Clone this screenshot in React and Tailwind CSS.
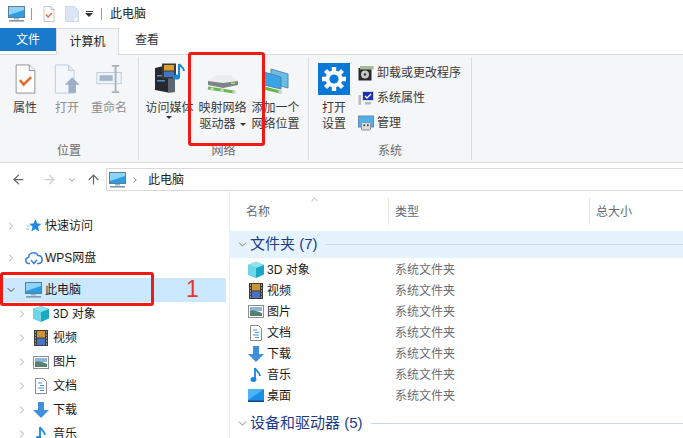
import React from 'react';
import { ChevronRight, ChevronDown, ChevronUp, ArrowLeft, ArrowRight, ArrowUp } from 'lucide-react';

const PcIcon = ({ className }) => (
  <svg viewBox="0 0 17 16" className={className}>
    <rect x="0.5" y="0.5" width="16" height="11" fill="#2f9be0" stroke="#5a7f99" />
    <path d="M1 1h15v3L1 9z" fill="#8fd4f7" />
    <rect x="6" y="12" width="5" height="1.5" fill="#9db3c2" />
    <rect x="1" y="14" width="15" height="1.6" fill="#7f99ab" />
  </svg>
);

const CheckDoc = ({ className }) => (
  <svg viewBox="0 0 22 32" className={className}>
    <path d="M1 1h14l6 6v24H1z" fill="#fff" stroke="#8d8d8d" />
    <path d="M15 1v6h6" fill="#eee" stroke="#8d8d8d" />
    <path d="M5 17l4 5 8-8" fill="none" stroke="#e8682a" strokeWidth="2.6" />
  </svg>
);

const OpenDoc = ({ className }) => (
  <svg viewBox="0 0 28 32" className={className}>
    <path d="M1 1h14l6 6v24H1z" fill="#f3f6fb" stroke="#bccbe0" />
    <path d="M15 1v6h6" fill="#dfe7f2" stroke="#bccbe0" />
    <path d="M19 14l8 8h-4v9h-8v-9h-4z" fill="#9fb0c6" />
  </svg>
);

const RenameIcon = ({ className }) => (
  <svg viewBox="0 0 28 32" className={className}>
    <rect x="1" y="9" width="26" height="12" fill="#eef3f8" stroke="#bfcad6" />
    <rect x="4" y="12" width="14" height="6" fill="#a5b6ca" />
    <path d="M17 2h8M17 30h8M21 2v28" stroke="#a9b3bd" strokeWidth="2" fill="none" />
  </svg>
);

const MediaIcon = ({ className }) => (
  <svg viewBox="0 0 32 30" className={className}>
    <path d="M1 5l13-3 7 3v24l-7 0.5L1 27z" fill="#26292e" />
    <path d="M14 2l7 3v24l-7 .5z" fill="#5d6670" />
    <rect x="3" y="12" width="8" height="1.5" fill="#4a90c8" />
    <rect x="3" y="17" width="8" height="1.5" fill="#4a90c8" />
    <rect x="8" y="0.5" width="14" height="15" fill="#3b3b3b" />
    <rect x="10" y="2" width="10" height="5.5" fill="#d9a02a" />
    <rect x="10" y="8.5" width="10" height="5.5" fill="#3f73c4" />
    <path d="M25 1v13" stroke="#1a86dc" strokeWidth="2" />
    <path d="M25 1c2 3 5 3 5 7" stroke="#1a86dc" strokeWidth="2" fill="none" />
    <ellipse cx="22.5" cy="14" rx="3.5" ry="2.6" fill="#1a86dc" />
  </svg>
);

const DriveIcon = ({ className }) => (
  <svg viewBox="0 0 32 21" className={className}>
    <path d="M1 8l8-6h15l7 6-15 4z" fill="#eceeee" />
    <path d="M1 8l15 2 15-2v4L16 15 1 12z" fill="#7f8586" />
    <rect x="24" y="9.500" width="4" height="1.500" fill="#a8e06a" />
    <path d="M1 15l26 4" stroke="#66bb4a" strokeWidth="3" />
    <circle cx="5" cy="16" r="1.800" fill="#c9d0d0" />
    <circle cx="15" cy="17.500" r="1.800" fill="#c9d0d0" />
    <circle cx="27" cy="19" r="1.800" fill="#c9d0d0" />
  </svg>
);

const NetPlace = ({ className }) => (
  <svg viewBox="0 0 26 26" className={className}>
    <path d="M8 1l17 5v14L8 15z" fill="#6cbcea" stroke="#5a8aa8" />
    <path d="M1 4l17 5v12L1 17z" fill="#3aa3e6" stroke="#4f86aa" />
    <path d="M1 20l16 4" stroke="#66b84a" strokeWidth="3" />
    <circle cx="17" cy="24" r="2" fill="#c9d0d0" />
  </svg>
);

const GearTile = ({ className }) => (
  <svg viewBox="0 0 32 32" className={className}>
    <rect width="32" height="32" fill="#0a78d7" />
    <g stroke="#fff" strokeWidth="4.4">
      <path d="M16 4v24M4 16h24M7.5 7.5l17 17M24.5 7.5l-17 17" />
    </g>
    <circle cx="16" cy="16" r="8.4" fill="#fff" />
    <circle cx="16" cy="16" r="4.6" fill="#0a78d7" />
  </svg>
);

const UninstallIcon = ({ className }) => (
  <svg viewBox="0 0 16 16" className={className}>
    <rect x="0.5" y="3" width="13" height="12.5" fill="#2a2a2a" />
    <rect x="2" y="1" width="13.5" height="3.5" fill="#a9b89c" />
    <circle cx="7" cy="9.5" r="4" fill="#c8c8c8" />
    <circle cx="7" cy="9.5" r="1.2" fill="#333" />
  </svg>
);

const SysPropIcon = ({ className }) => (
  <svg viewBox="0 0 16 16" className={className}>
    <rect x="0.5" y="5" width="2.5" height="10" fill="#b6bcc0" />
    <rect x="4" y="1" width="12" height="10" fill="#d5dade" />
    <rect x="5" y="2" width="10" height="8" fill="#1c2fb5" />
    <path d="M7 6l2 2 4-4" stroke="#fff" strokeWidth="1.4" fill="none" />
    <rect x="7" y="12" width="6" height="2.5" fill="#b4babf" />
  </svg>
);

const ManageIcon = ({ className }) => (
  <svg viewBox="0 0 16 16" className={className}>
    <rect x="0.5" y="1" width="15" height="11" fill="#4db0ec" stroke="#6a8ba3" />
    <rect x="3.5" y="7.5" width="9" height="7.5" rx="1" fill="#d9dde0" stroke="#8b9298" />
    <rect x="5.5" y="9.5" width="1.6" height="1.6" fill="#333" />
    <rect x="9" y="9.5" width="1.6" height="1.6" fill="#333" />
  </svg>
);

const BlankDoc = ({ className }) => (
  <svg viewBox="0 0 14 16" className={className}>
    <path d="M0.5 0.5h9l4 4v11H.5z" fill="#dbe5f3" stroke="#cdd8e8" />
    <path d="M9.5 16v-4h4" fill="#fff" />
  </svg>
);

const StarIcon = ({ className }) => (
  <svg viewBox="0 0 16 16" className={className}>
    <path d="M9.5 1l1.6 4.5 4.4.3-3.5 3 1.2 4.7-3.9-2.6-4 2.6 1.3-4.7-3.4-3 4.3-.3z" fill="#1f8ae0" />
    <path d="M1 8h3M0 11h3" stroke="#8cc4ee" strokeWidth="1" />
  </svg>
);

const CloudIcon = ({ className }) => (
  <svg viewBox="0 0 18 14" className={className}>
    <path d="M5 12.5H4a3 3 0 0 1-.5-6A5 5 0 0 1 13 4.6a4 4 0 0 1 1 7.9h-2" fill="none" stroke="#3d7fe6" strokeWidth="1.5" />
    <path d="M6 9l3 3.5L12 9" fill="none" stroke="#3d7fe6" strokeWidth="1.5" />
  </svg>
);

const CubeIcon = ({ className }) => (
  <svg viewBox="0 0 16 16" className={className}>
    <path d="M8 0l8 3v9.5L8 16 0 12.500V3z" fill="#1ba8c2" />
    <path d="M8 0l8 3-8 3-8-3z" fill="#8ce4ee" />
    <path d="M0 3l8 3v10L0 12.500z" fill="#6ed6e4" />
  </svg>
);

const FilmIcon = ({ className }) => (
  <svg viewBox="0 0 14 16" className={className}>
    <rect width="14" height="16" fill="#3d3d3d" />
    <rect x="3" y="1" width="8" height="6.500" fill="#c9962f" />
    <rect x="3" y="8.500" width="8" height="6.500" fill="#4a72c2" />
    <path d="M1 2h1M1 5h1M1 8h1M1 11h1M1 14h1M12 2h1M12 5h1M12 8h1M12 11h1M12 14h1" stroke="#ddd" />
  </svg>
);

const PictureIcon = ({ className }) => (
  <svg viewBox="0 0 16 13" className={className}>
    <rect x="0.5" y="0.5" width="15" height="12" fill="#fff" stroke="#8b8f93" />
    <rect x="2" y="2" width="12" height="4" fill="#8fb5d8" />
    <path d="M2 6c4-1 8 0 12 2v3H2z" fill="#56806e" />
  </svg>
);

const DocIcon = ({ className }) => (
  <svg viewBox="0 0 12 16" className={className}>
    <path d="M.5.5h8l3 3v12H.5z" fill="#fff" stroke="#8d8d8d" />
    <path d="M3 5h4M5 7.500h4M3 10h6M5 12.500h4" stroke="#3f9ad6" />
  </svg>
);

const DownIcon = ({ className }) => (
  <svg viewBox="0 0 16 16" className={className}>
    <path d="M5 0h6v8h5l-8 8-8-8h5z" fill="#3e8fdc" />
  </svg>
);

const NoteIcon = ({ className }) => (
  <svg viewBox="0 0 12 16" className={className}>
    <path d="M5 1v11" stroke="#1a86dc" strokeWidth="1.800" />
    <path d="M5 1c1 3 5 4 5 8" stroke="#1a86dc" strokeWidth="1.800" fill="none" />
    <ellipse cx="3.500" cy="12.500" rx="3" ry="2.500" fill="#1a86dc" />
  </svg>
);

const DesktopIcon = ({ className }) => (
  <svg viewBox="0 0 16 13" className={className}>
    <rect width="16" height="13" fill="#1b8fe6" />
    <path d="M0 0h16L0 11z" fill="#4db4f2" />
    <rect y="11.500" width="16" height="1.500" fill="#12437a" />
  </svg>
);

const Caret = ({ className = '' }) => (
  <span className={`inline-block border-x-[3px] border-t-[3px] border-x-transparent border-t-[#333] ${className}`} />
);

const LargeBtn = ({ icon, lines, width = 'w-[53px]', muted, caret, caretBelow }) => (
  <div className={`flex flex-col items-center ${width} shrink-0`}>
    <div className="h-[43px] w-full flex items-center justify-center">{icon}</div>
    <div className={`text-center text-xs leading-4 whitespace-nowrap ${muted ? 'text-[#8f8f8f]' : 'text-[#3a3a3a]'}`}>
      {lines.map((l, i) => (
        <div key={l}>
          {l}
          {caret && i === lines.length - 1 && <Caret className="ml-1 align-middle" />}
        </div>
      ))}
      {caretBelow && (
        <div className="h-[3px] flex justify-center">
          <Caret />
        </div>
      )}
    </div>
  </div>
);

const Group = ({ label, width, children }) => (
  <div className={`${width} shrink-0 flex flex-col border-r border-[#dcdddf] my-0.5`}>
    <div className="h-[86px] flex px-1">{children}</div>
    <div className="text-center text-xs leading-4 text-[#6b6b6b]">{label}</div>
  </div>
);

const SmallBtn = ({ icon, text }) => (
  <div className="flex items-center gap-[3px] h-6 text-xs text-[#3a3a3a] whitespace-nowrap">
    {icon}
    <span>{text}</span>
  </div>
);

const navChildren = [
  ['3D 对象', <CubeIcon className="w-4 h-4" />],
  ['视频', <FilmIcon className="w-[14px] h-4" />],
  ['图片', <PictureIcon className="w-4 h-[13px]" />],
  ['文档', <DocIcon className="w-3 h-4" />],
  ['下载', <DownIcon className="w-4 h-4" />],
  ['音乐', <NoteIcon className="w-3 h-4" />],
];

const files = [
  ['3D 对象', <CubeIcon className="w-4 h-4" />],
  ['视频', <FilmIcon className="w-[14px] h-4" />],
  ['图片', <PictureIcon className="w-4 h-[13px]" />],
  ['文档', <DocIcon className="w-3 h-4" />],
  ['下载', <DownIcon className="w-4 h-4" />],
  ['音乐', <NoteIcon className="w-3 h-4" />],
  ['桌面', <DesktopIcon className="w-4 h-[13px]" />],
];

const NavRow = ({ icon, text, indent, open, selected, className = '' }) => (
  <div className={`h-6 shrink-0 flex items-center text-xs text-[#1a1a1a] whitespace-nowrap ${selected ? 'bg-[#cce8ff]' : ''} ${className}`}>
    <div className={`${indent ? 'w-[28px] pl-4' : 'w-[22px] pl-[5px]'} shrink-0`}>
      {open ? <ChevronDown size={12} strokeWidth={2} className="text-[#444]" /> : <ChevronRight size={12} strokeWidth={2} className="text-[#a6a6a6]" />}
    </div>
    <div className={`${indent ? 'w-[25px]' : 'w-[23px]'} flex justify-center shrink-0`}>{icon}</div>
    <span>{text}</span>
  </div>
);

const GroupHead = ({ text, active }) => (
  <div className={`h-[27px] flex items-center ${active ? 'bg-[#e5f3ff]' : ''}`}>
    <ChevronDown size={13} strokeWidth={1.5} className="ml-1.5 text-[#666] shrink-0" />
    <span className="ml-px text-[15px] text-[#1e3a8a] whitespace-nowrap">{text}</span>
    <div className="flex-1 h-px ml-2 bg-[#c9d9e8]" />
  </div>
);

export default function App() {
  return (
    <div className="relative w-[683px] h-[438px] overflow-hidden bg-white font-['Liberation_Sans','Noto_Sans_CJK_SC',sans-serif]">
      {/* title bar */}
      <div className="h-7 flex items-center">
        <PcIcon className="w-[17px] h-4 ml-2" />
        <div className="w-px h-3 bg-[#9a9a9a] ml-1.5" />
        <CheckDoc className="w-3 h-4 ml-[11px]" />
        <BlankDoc className="w-[14px] h-4 ml-2.5" />
        <div className="ml-[6px] flex flex-col items-center gap-px">
          <div className="w-[7px] h-px bg-[#333]" />
          <div className="border-x-[4px] border-t-[4px] border-x-transparent border-t-[#333]" />
        </div>
        <div className="w-px h-3 bg-[#9a9a9a] ml-2" />
        <span className="ml-2 text-xs text-[#222]">此电脑</span>
      </div>

      {/* tabs */}
      <div className="h-[26px] flex text-xs">
        <div className="w-14 h-[23px] bg-[#1979ca] text-white flex items-center justify-center">文件</div>
        <div className="w-[63px] h-[27px] bg-[#f5f6f7] border-x border-t border-[#dadbdc] text-[#222] flex items-center justify-center z-10 relative">计算机</div>
        <div className="w-14 h-[23px] text-[#333] flex items-center justify-center">查看</div>
      </div>

      {/* ribbon */}
      <div className="h-[109px] bg-[#f5f6f7] border-y border-[#dadbdc] flex">
        <Group label="位置" width="w-[139px]">
          <LargeBtn width="w-[42px]" icon={<CheckDoc className="w-[21px] h-[30px]" />} lines={['属性']} />
          <LargeBtn width="w-[42px]" muted icon={<OpenDoc className="w-[27px] h-[30px]" />} lines={['打开']} />
          <LargeBtn width="w-[42px]" muted icon={<RenameIcon className="w-7 h-[30px]" />} lines={['重命名']} />
        </Group>
        <Group label="网络" width="w-[170px]">
          <LargeBtn caretBelow icon={<MediaIcon className="w-8 h-[30px] mb-0.5" />} lines={['访问媒体']} />
          <LargeBtn icon={<DriveIcon className="w-8 h-[21px] mt-[9px]" />} lines={['映射网络', '驱动器']} caret />
          <LargeBtn icon={<NetPlace className="w-[26px] h-[26px] mt-[5px]" />} lines={['添加一个', '网络位置']} />
        </Group>
        <Group label="系统" width="w-[163px]">
          <LargeBtn width="w-[42px]" icon={<GearTile className="w-8 h-8" />} lines={['打开', '设置']} />
          <div className="flex flex-col ml-[3px] pt-1 gap-px">
            <SmallBtn icon={<UninstallIcon className="w-4 h-4" />} text="卸载或更改程序" />
            <SmallBtn icon={<SysPropIcon className="w-4 h-4" />} text="系统属性" />
            <SmallBtn icon={<ManageIcon className="w-4 h-4" />} text="管理" />
          </div>
        </Group>
      </div>

      {/* address bar */}
      <div className="h-[23px] mt-[5px] flex items-center">
        <ArrowLeft size={15} strokeWidth={2} className="ml-[11px] text-[#666] shrink-0" />
        <ArrowRight size={15} strokeWidth={2} className="ml-4 text-[#cfcfcf] shrink-0" />
        <ChevronDown size={10} strokeWidth={2} className="ml-[10px] text-[#777] shrink-0" />
        <ArrowUp size={15} strokeWidth={2} className="ml-[9px] text-[#666] shrink-0" />
        <div className="ml-[5px] flex-1 h-[23px] border border-r-0 border-[#d9d9d9] flex items-center text-xs text-[#222]">
          <PcIcon className="w-[17px] h-4 ml-[2px]" />
          <ChevronRight size={10} strokeWidth={2} className="ml-1 text-[#666]" />
          <span className="ml-2">此电脑</span>
        </div>
      </div>

      {/* body */}
      <div className="flex">
        <div className="w-[226px] shrink-0 pt-[23px] flex flex-col">
          <NavRow icon={<StarIcon className="w-4 h-4" />} text="快速访问" />
          <NavRow className="mt-2" icon={<CloudIcon className="w-[18px] h-[14px]" />} text="WPS网盘" />
          <NavRow className="mt-2" selected open icon={<PcIcon className="w-[17px] h-4" />} text="此电脑" />
          {navChildren.map(([t, ic]) => (
            <NavRow key={t} indent icon={ic} text={t} />
          ))}
        </div>

        <div className="flex-1 ml-[3px] border-l border-[#eeeeee] min-w-0">
          <div className="relative h-10 flex text-xs text-[#5f6b78] pt-[7px]">
            <ChevronUp size={11} strokeWidth={1.5} className="absolute left-[79px] top-[3px] text-[#888]" />
            <div className="w-[159px] h-[27px] pl-[16px] flex items-center border-r border-[#e5e5e5] shrink-0">名称</div>
            <div className="w-[201px] h-[27px] pl-[6px] flex items-center border-r border-[#e5e5e5] shrink-0">类型</div>
            <div className="pl-[6px] h-[27px] flex items-center">总大小</div>
          </div>
          <GroupHead text="文件夹 (7)" active />
          <div className="mt-[1px]">
            {files.map(([t, ic]) => (
              <div key={t} className="h-[21px] flex items-center text-xs whitespace-nowrap">
                <div className="w-[17px] ml-[17px] flex justify-center shrink-0">{ic}</div>
                <span className="ml-[3px] w-[128px] text-[#1a1a1a] shrink-0">{t}</span>
                <span className="text-[#6d6d6d]">系统文件夹</span>
              </div>
            ))}
          </div>
          <div className="mt-1">
            <GroupHead text="设备和驱动器 (5)" />
          </div>
        </div>
      </div>

      {/* annotations */}
      <div className="absolute left-[188px] top-[52px] w-[77px] h-[94px] border-[3px] border-[#f01a14] rounded-[3px]" />
      <div className="absolute left-0 top-[272px] w-[154px] h-[34px] border-[3px] border-[#f01a14] rounded-[3px]" />
      <div className="absolute left-[186px] top-[275px] text-[23px] leading-7 text-[#e8352a]">1</div>
    </div>
  );
}
